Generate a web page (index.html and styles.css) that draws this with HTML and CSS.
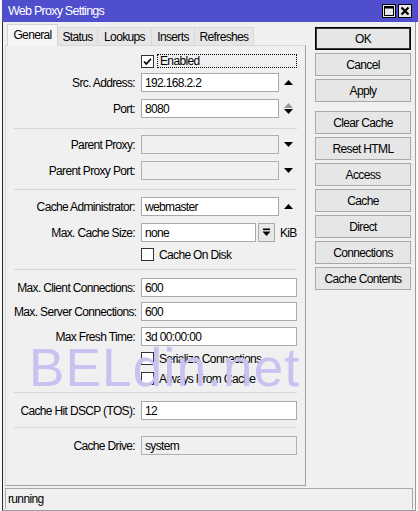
FILE: index.html
```html
<!DOCTYPE html>
<html>
<head>
<meta charset="utf-8">
<link rel="stylesheet" href="styles.css">
</head>
<body>
<div class="win">
  <div class="titlebar">
    <span class="title">Web Proxy Settings</span>
    <div class="tbtns">
      <span class="tbtn"><svg width="12" height="12" viewBox="0 0 12 12"><rect x="1.5" y="1.5" width="9" height="9" fill="none" stroke="#000" stroke-width="1"/><rect x="1" y="1" width="10" height="2.5" fill="#000"/></svg></span>
      <span class="tbtn"><svg width="12" height="12" viewBox="0 0 12 12"><path d="M2.5 2.5 L9.5 9.5 M9.5 2.5 L2.5 9.5" stroke="#000" stroke-width="2.2"/></svg></span>
    </div>
  </div>
  <div class="main">
    <div class="content">
      <div class="left">
        <div class="tabs">
          <div class="tab sel t-gen">General</div>
          <div class="tab t-sta">Status</div>
          <div class="tab t-loo">Lookups</div>
          <div class="tab t-ins">Inserts</div>
          <div class="tab t-ref">Refreshes</div>
        </div>
        <div class="panel">
          <div class="row ckrow first">
            <span class="lbl"></span>
            <span class="cb"><svg width="11" height="11" viewBox="0 0 11 11"><path d="M2 5.5 L4.3 8 L9 2.8" fill="none" stroke="#000" stroke-width="1.7"/></svg></span>
            <span class="focus">Enabled</span>
          </div>
          <div class="row m5">
            <span class="lbl">Src. Address:</span>
            <span class="in n">192.168.2.2</span>
            <span class="arr"><svg width="9" height="5" viewBox="0 0 9 5"><polygon points="0,5 9,5 4.5,0" fill="#000"/></svg></span>
          </div>
          <div class="row m7">
            <span class="lbl">Port:</span>
            <span class="in n">8080</span>
            <span class="arr"><svg width="9" height="5" viewBox="0 0 9 5"><polygon points="0,5 9,5 4.5,0" fill="#9a9a9a"/></svg><svg width="9" height="5" viewBox="0 0 9 5"><polygon points="0,0 9,0 4.5,5" fill="#000"/></svg></span>
          </div>
          <div class="sep m10"></div>
          <div class="row m6">
            <span class="lbl">Parent Proxy:</span>
            <span class="in n dis"></span>
            <span class="arr"><svg width="9" height="5" viewBox="0 0 9 5"><polygon points="0,0 9,0 4.5,5" fill="#000"/></svg></span>
          </div>
          <div class="row m7">
            <span class="lbl">Parent Proxy Port:</span>
            <span class="in n dis"></span>
            <span class="arr"><svg width="9" height="5" viewBox="0 0 9 5"><polygon points="0,0 9,0 4.5,5" fill="#000"/></svg></span>
          </div>
          <div class="sep m9"></div>
          <div class="row m7">
            <span class="lbl">Cache Administrator:</span>
            <span class="in n">webmaster</span>
            <span class="arr"><svg width="9" height="5" viewBox="0 0 9 5"><polygon points="0,5 9,5 4.5,0" fill="#000"/></svg></span>
          </div>
          <div class="row m7">
            <span class="lbl">Max. Cache Size:</span>
            <span class="in s">none</span>
            <span class="dd"><svg width="9" height="9" viewBox="0 0 9 9"><rect x="1" y="0.5" width="7" height="1.6" fill="#000"/><polygon points="0.5,3.5 8.5,3.5 4.5,8" fill="#000"/></svg></span>
            <span class="unit">KiB</span>
          </div>
          <div class="row ckrow m6">
            <span class="lbl"></span>
            <span class="cb"></span>
            <span class="cklbl">Cache On Disk</span>
          </div>
          <div class="sep m8"></div>
          <div class="row m8">
            <span class="lbl">Max. Client Connections:</span>
            <span class="in w">600</span>
          </div>
          <div class="row m5">
            <span class="lbl">Max. Server Connections:</span>
            <span class="in w">600</span>
          </div>
          <div class="row m6">
            <span class="lbl">Max Fresh Time:</span>
            <span class="in w">3d 00:00:00</span>
          </div>
          <div class="row ckrow m6">
            <span class="lbl"></span>
            <span class="cb"></span>
            <span class="cklbl">Serialize Connections</span>
          </div>
          <div class="row ckrow m7">
            <span class="lbl"></span>
            <span class="cb"></span>
            <span class="cklbl">Always From Cache</span>
          </div>
          <div class="sep m7"></div>
          <div class="row m8">
            <span class="lbl">Cache Hit DSCP (TOS):</span>
            <span class="in w">12</span>
          </div>
          <div class="sep m7"></div>
          <div class="row m8">
            <span class="lbl">Cache Drive:</span>
            <span class="in w dis">system</span>
          </div>
          <div class="wm">BELdin.net</div>
        </div>
      </div>
      <div class="btns">
        <div class="btn def">OK</div>
        <div class="btn">Cancel</div>
        <div class="btn">Apply</div>
        <div class="btn gap">Clear Cache</div>
        <div class="btn">Reset HTML</div>
        <div class="btn">Access</div>
        <div class="btn">Cache</div>
        <div class="btn">Direct</div>
        <div class="btn">Connections</div>
        <div class="btn">Cache Contents</div>
      </div>
    </div>
    <div class="status">running</div>
  </div>
</div>
</body>
</html>
```

FILE: styles.css
```css
html, body {
  margin: 0;
  padding: 0;
}
body {
  background: #fafafa;
  width: 418px;
  height: 511px;
  overflow: hidden;
  font-family: "Liberation Sans", Arial, sans-serif;
  font-size: 12px;
  letter-spacing: -0.65px;
  color: #000;
}
.win {
  margin-left: 2px;
  width: 416px;
  height: 511px;
  display: flex;
  flex-direction: column;
}
.titlebar {
  height: 22px;
  flex: none;
  background: #4f4fce;
  display: flex;
  align-items: center;
  justify-content: space-between;
  padding: 0 6px 0 6px;
}
.title {
  color: #fff;
  font-size: 12.5px;
  letter-spacing: -0.75px;
}
.tbtns {
  display: flex;
  gap: 2px;
  margin-top: -1px;
}
.tbtn {
  width: 14px;
  height: 14px;
  box-sizing: border-box;
  border: 1px solid #000;
  background: #e6e6e6;
  display: flex;
  align-items: center;
  justify-content: center;
}
.main {
  flex: 1;
  margin-right: 2px;
  background: #f0f0f0;
  border-left: 1px solid #2a2a2a;
  border-right: 1px solid #9c9c9c;
  border-bottom: 1px solid #9c9c9c;
  display: flex;
  flex-direction: column;
}
.content {
  display: flex;
  padding-left: 2px;
}
.left {
  width: 301px;
  display: flex;
  flex-direction: column;
}
.tabs {
  height: 23px;
  display: flex;
  align-items: flex-end;
  padding-left: 2px;
  position: relative;
  z-index: 1;
}
.tab {
  height: 18px;
  box-sizing: border-box;
  border: 1px solid #d9d9d9;
  border-bottom: 0;
  background: #e6e6e6;
  margin-left: -1px;
  display: flex;
  align-items: center;
  justify-content: center;
  padding-top: 1px;
}
.tab.sel {
  height: 22px;
  margin-left: 0;
  margin-bottom: -1px;
  background: #f6f6f6;
  border-color: #d4d4d4;
  padding-top: 0;
  padding-bottom: 2px;
  position: relative;
  z-index: 2;
}
.t-gen { width: 51px; }
.t-sta { width: 41px; }
.t-loo { width: 55px; }
.t-ins { width: 44px; }
.t-ref { width: 60px; }
.panel {
  position: relative;
  height: 441px;
  box-sizing: border-box;
  border: 1px solid #d8d8d8;
  border-right-color: #a0a0a0;
  border-bottom-color: #a0a0a0;
  padding-top: 8px;
}
.row {
  display: flex;
  align-items: center;
  height: 19px;
  padding-left: 8px;
}
.row.ckrow { height: 13px; }
.row.first { height: 14px; }
.lbl {
  width: 121px;
  flex: none;
  margin-right: 6px;
  text-align: right;
  white-space: nowrap;
}
.in {
  height: 19px;
  box-sizing: border-box;
  border: 1px solid #a9a9a9;
  background: #fff;
  padding: 0 3px;
  display: flex;
  align-items: center;
  white-space: nowrap;
}
.in.n { width: 138px; }
.in.w { width: 156px; }
.in.s { width: 115px; }
.in.dis { background: #f0f0f0; border-color: #b0b0b0; }
.arr {
  margin-left: 5px;
  width: 9px;
  display: flex;
  flex-direction: column;
  align-items: center;
  gap: 1px;
}
.arr svg { display: block; }
.dd {
  margin-left: 2px;
  width: 17px;
  height: 19px;
  box-sizing: border-box;
  border: 1px solid #a9a9a9;
  background: #e8e8e8;
  display: flex;
  align-items: center;
  justify-content: center;
}
.unit { margin-left: 5px; }
.cb {
  width: 13px;
  height: 13px;
  box-sizing: border-box;
  border: 1px solid #333;
  background: #fff;
  display: flex;
  align-items: center;
  justify-content: center;
  flex: none;
}
.focus {
  margin-left: 3px;
  width: 140px;
  height: 14px;
  box-sizing: border-box;
  border: 1px dotted #000;
  padding-left: 2px;
  display: flex;
  align-items: center;
}
.cklbl { margin-left: 5px; white-space: nowrap; }
.sep {
  height: 1px;
  margin-left: 8px;
  margin-right: 8px;
  background: #d6d6d6;
}
.m5 { margin-top: 5px; }
.m6 { margin-top: 6px; }
.m7 { margin-top: 7px; }
.m8 { margin-top: 8px; }
.m9 { margin-top: 9px; }
.m10 { margin-top: 10px; }
.wm {
  position: absolute;
  left: 23px;
  top: 295px;
  font-family: "Liberation Sans", sans-serif;
  font-size: 53px;
  line-height: 53px;
  letter-spacing: 1.2px;
  color: #c9c1ef;
  white-space: nowrap;
}
.btns {
  margin-left: 9px;
  padding-top: 5px;
  width: 96px;
  display: flex;
  flex-direction: column;
}
.btn {
  height: 23px;
  box-sizing: border-box;
  border: 1px solid #a8a8a8;
  background: #e6e6e6;
  display: flex;
  align-items: center;
  justify-content: center;
  margin-top: 3px;
  white-space: nowrap;
}
.btn.def {
  margin-top: 0;
  border-color: #000;
  box-shadow: inset 0 0 0 1px #3a3a3a;
}
.btn.gap { margin-top: 9px; }
.status {
  margin: 2px 2px 0 2px;
  height: 21px;
  box-sizing: border-box;
  border: 1px solid #a8a8a8;
  border-bottom: 0;
  padding-left: 2px;
  display: flex;
  align-items: center;
}
```
